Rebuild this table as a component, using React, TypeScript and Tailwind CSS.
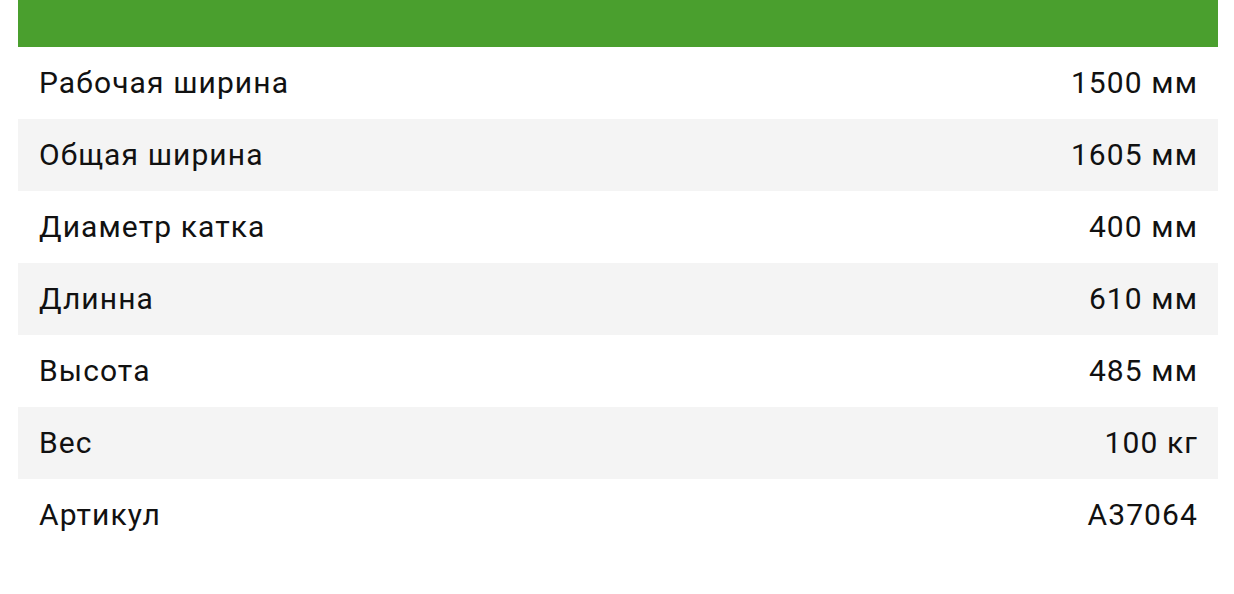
const specs = [
  { label: "Рабочая ширина", value: "1500 мм" },
  { label: "Общая ширина", value: "1605 мм" },
  { label: "Диаметр катка", value: "400 мм" },
  { label: "Длинна", value: "610 мм" },
  { label: "Высота", value: "485 мм" },
  { label: "Вес", value: "100 кг" },
  { label: "Артикул", value: "A37064" },
];

export default function App() {
  return (
    <div className="min-h-screen bg-white pl-[18px] pr-[16px] font-['Roboto',sans-serif] text-[#111]">
      <div className="h-[47px] bg-[#4a9f2e]" />
      <div className="flex flex-col">
        {specs.map((s, i) => (
          <div
            key={s.label}
            className={`flex h-[72px] items-center justify-between pb-[2px] pl-[21px] pr-[20px] text-[30px] tracking-[1.1px] ${i % 2 === 1 ? "bg-[#f4f4f4]" : "bg-white"}`}
          >
            <span>{s.label}</span>
            <span>{s.value}</span>
          </div>
        ))}
      </div>
    </div>
  );
}
